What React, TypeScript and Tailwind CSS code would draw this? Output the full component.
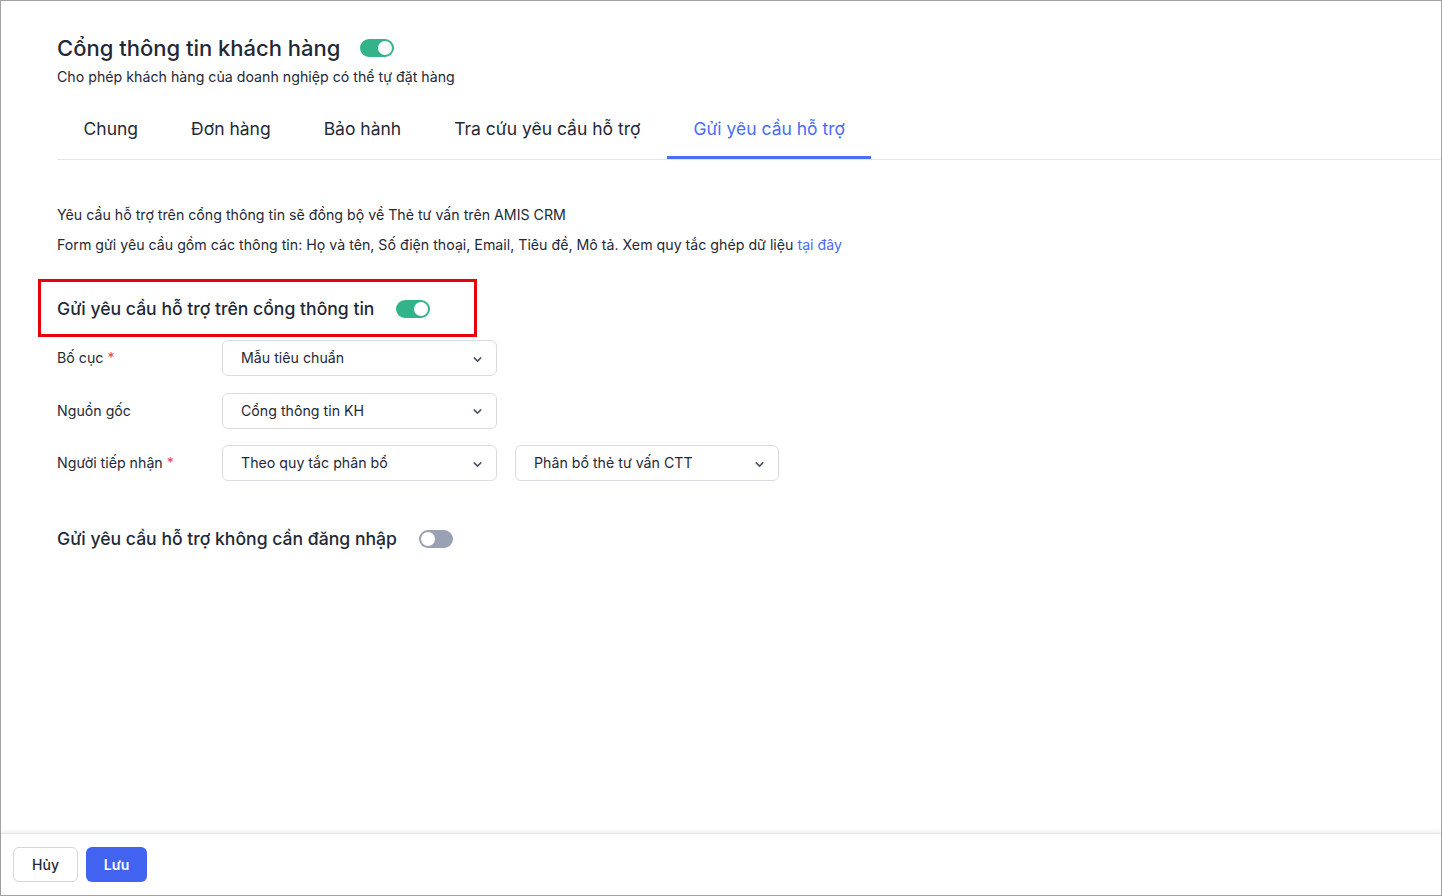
import React from "react";

function Toggle({ on }: { on: boolean }) {
  return (
    <div
      className={`relative h-[18px] w-[34px] rounded-full ${on ? "bg-[#34b38a]" : "bg-[#9aa1b3]"}`}
    >
      <div
        className={`absolute top-[2px] h-[14px] w-[14px] rounded-full bg-white ${on ? "left-[18px]" : "left-[2px]"}`}
      />
    </div>
  );
}

function Chevron() {
  return (
    <svg width="13" height="13" viewBox="0 0 12 12" fill="none" className="mt-[2px]">
      <path d="M3 4.5L6 7.5L9 4.5" stroke="#4b5563" strokeWidth="1.4" strokeLinecap="round" strokeLinejoin="round" />
    </svg>
  );
}

function Select({ value, w }: { value: string; w: string }) {
  return (
    <div
      className={`flex h-[36px] items-center justify-between rounded-[6px] border border-[#d9dce3] bg-white pl-[18px] pr-[12px] text-[14.2px] text-[#1f2937] ${w}`}
    >
      <span>{value}</span>
      <Chevron />
    </div>
  );
}

export default function App() {
  const tabs = ["Chung", "Đơn hàng", "Bảo hành", "Tra cứu yêu cầu hỗ trợ", "Gửi yêu cầu hỗ trợ"];
  return (
    <div
      className="flex h-[896px] w-[1442px] flex-col border border-[#a3a3a3] bg-white text-[#1f2937]"
      style={{ fontFamily: "Inter, 'Noto Sans', sans-serif" }}
    >
      <div className="flex-1 pl-[56px] pt-[32px]">
        <div className="flex items-center gap-[20px]">
          <h1 className="text-[22px] font-medium leading-[30px] text-[#1f2937]">Cổng thông tin khách hàng</h1>
          <Toggle on />
        </div>
        <p className="mt-[4px] text-[14.2px] leading-[20px] text-[#1f2937]">
          Cho phép khách hàng của doanh nghiệp có thể tự đặt hàng
        </p>
        <div className="mt-[24px] flex border-b border-[#e3e5ea]">
          {tabs.map((t, i) => {
            const active = i === tabs.length - 1;
            return (
              <div
                key={t}
                className={`px-[26.5px] pb-[15px] pt-[6px] text-[17.5px] leading-[24px] ${active ? "border-b-[3px] border-[#4a6cf7] text-[#4a6cf7]" : "border-b-[3px] border-transparent text-[#1f2937]"}`}
              >
                {t}
              </div>
            );
          })}
        </div>
        <div className="mt-[45px] text-[14.2px] leading-[20px] text-[#1f2937]">
          <p>Yêu cầu hỗ trợ trên cổng thông tin sẽ đồng bộ về Thẻ tư vấn trên AMIS CRM</p>
          <p className="mt-[10px]">
            Form gửi yêu cầu gồm các thông tin: Họ và tên, Số điện thoại, Email, Tiêu đề, Mô tả. Xem quy tắc ghép dữ liệu{" "}
            <span className="text-[#4a6cf7]">tại đây</span>
          </p>
        </div>
        <div className="ml-[-19px] mt-[24px] flex h-[58px] w-[439px] items-center gap-[22px] border-[3px] border-[#e8000b] pl-[16px] pt-[2px]">
          <span className="text-[17.6px] font-medium leading-[24px]">Gửi yêu cầu hỗ trợ trên cổng thông tin</span>
          <Toggle on />
        </div>
        <div className="mt-[3px] flex flex-col gap-[16.5px] text-[14.2px]">
          <div className="flex items-center">
            <span className="w-[165px]">
              Bố cục <span className="text-[#e5484d]">*</span>
            </span>
            <Select value="Mẫu tiêu chuẩn" w="w-[275px]" />
          </div>
          <div className="flex items-center">
            <span className="w-[165px]">Nguồn gốc</span>
            <Select value="Cổng thông tin KH" w="w-[275px]" />
          </div>
          <div className="flex items-center">
            <span className="w-[165px]">
              Người tiếp nhận <span className="text-[#e5484d]">*</span>
            </span>
            <Select value="Theo quy tắc phân bổ" w="w-[275px]" />
            <div className="ml-[18px]">
              <Select value="Phân bổ thẻ tư vấn CTT" w="w-[264px]" />
            </div>
          </div>
        </div>
        <div className="mt-[46px] flex items-center gap-[22px]">
          <span className="text-[17.6px] font-medium leading-[24px]">Gửi yêu cầu hỗ trợ không cần đăng nhập</span>
          <Toggle on={false} />
        </div>
      </div>
      <div className="flex h-[62px] items-center gap-[8px] border-t border-[#e5e7eb] pl-[12px] shadow-[0_-2px_4px_rgba(0,0,0,0.06)]">
        <button className="h-[35px] w-[65px] rounded-[6px] border border-[#d4d6db] bg-white text-[14px] font-medium text-[#1f2937]">
          Hủy
        </button>
        <button className="h-[35px] w-[61px] rounded-[6px] bg-[#4262f0] text-[14px] font-semibold text-white">
          Lưu
        </button>
      </div>
    </div>
  );
}
